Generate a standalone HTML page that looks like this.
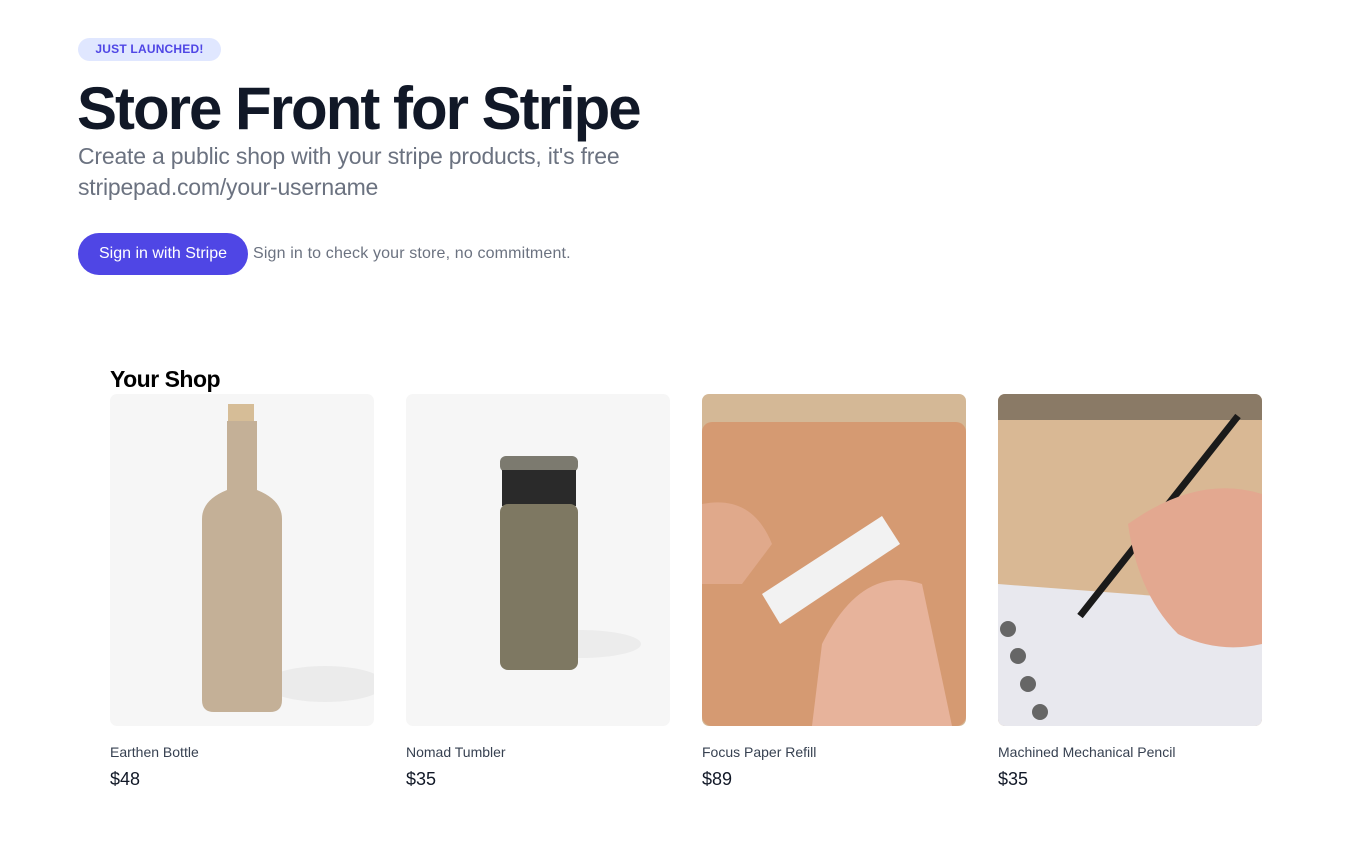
<!DOCTYPE html>
<html><head><style>
*{margin:0;padding:0;box-sizing:border-box}
body{width:1370px;height:858px;background:#fff;font-family:"Liberation Sans",sans-serif;position:relative;overflow:hidden}
.badge{position:absolute;left:78px;top:38px;width:143px;height:23px;border-radius:12px;background:#e0e7ff;color:#4f46e5;font-size:12px;font-weight:bold;text-align:center;line-height:23px;letter-spacing:0.2px}
h1{position:absolute;left:77px;top:74px;font-size:60px;font-weight:bold;color:#111827;letter-spacing:-2px;white-space:nowrap}
.sub{position:absolute;left:78px;top:141px;font-size:23px;line-height:31px;color:#6b7280;letter-spacing:-0.2px}
.btn{position:absolute;left:78px;top:233px;width:170px;height:42px;border-radius:21px;background:#4f46e5;color:#fff;font-size:16px;text-align:center;line-height:42px}
.note{position:absolute;left:253px;top:245px;font-size:16px;color:#6b7280;letter-spacing:0.15px}
h2{position:absolute;left:110px;top:366px;font-size:23px;font-weight:bold;color:#000;letter-spacing:-0.5px}
.card{position:absolute;top:394px;width:264px;height:332px;border-radius:7px;overflow:hidden;background:#f6f6f6}
.name{position:absolute;top:744px;font-size:14px;color:#374151}
.price{position:absolute;top:769px;font-size:18px;color:#111827}
</style></head><body>
<div class="badge">JUST LAUNCHED!</div>
<h1>Store Front for Stripe</h1>
<div class="sub">Create a public shop with your stripe products, it's free<br>stripepad.com/your-username</div>
<div class="btn">Sign in with Stripe</div>
<div class="note">Sign in to check your store, no commitment.</div>
<h2>Your Shop</h2>

<div class="card" style="left:110px">
<svg width="264" height="332"><ellipse cx="215" cy="290" rx="60" ry="18" fill="#ebebeb"/>
<rect x="118" y="10" width="26" height="18" fill="#d6bd97"/>
<path d="M117 27 L147 27 L147 96 Q172 106 172 125 L172 306 Q172 318 160 318 L104 318 Q92 318 92 306 L92 125 Q92 106 117 96 Z" fill="#c4b097"/></svg></div>

<div class="card" style="left:406px">
<svg width="264" height="332"><ellipse cx="175" cy="250" rx="60" ry="14" fill="#ececec"/>
<rect x="94" y="62" width="78" height="16" rx="6" fill="#7c7a6f"/>
<rect x="96" y="76" width="74" height="36" fill="#2a2a2a"/>
<rect x="94" y="110" width="78" height="166" rx="8" fill="#7e7862"/></svg></div>

<div class="card" style="left:702px;background:#d4b896">
<svg width="264" height="332"><rect x="0" y="28" width="264" height="304" rx="10" fill="#d59a72"/>
<path d="M60 200 L180 122 L198 150 L78 230 Z" fill="#f2f2f2"/>
<path d="M0 110 Q50 100 70 150 L40 190 L0 190 Z" fill="#e0a98b"/>
<path d="M120 250 Q160 170 220 190 L250 332 L110 332 Z" fill="#e7b39b"/></svg></div>

<div class="card" style="left:998px;background:#d9b894">
<svg width="264" height="332"><rect x="0" y="0" width="264" height="26" fill="#8a7a66"/>
<path d="M0 190 L264 210 L264 332 L0 332 Z" fill="#e8e8ee"/>
<path d="M82 222 L240 22" stroke="#1a1a1a" stroke-width="7"/>
<path d="M130 130 Q200 80 264 100 L264 250 Q220 260 180 240 Q140 200 130 130 Z" fill="#e3a890"/>
<g fill="#666"><circle cx="10" cy="235" r="8"/><circle cx="20" cy="262" r="8"/><circle cx="30" cy="290" r="8"/><circle cx="42" cy="318" r="8"/></g></svg></div>

<div class="name" style="left:110px">Earthen Bottle</div><div class="price" style="left:110px">$48</div>
<div class="name" style="left:406px">Nomad Tumbler</div><div class="price" style="left:406px">$35</div>
<div class="name" style="left:702px">Focus Paper Refill</div><div class="price" style="left:702px">$89</div>
<div class="name" style="left:998px">Machined Mechanical Pencil</div><div class="price" style="left:998px">$35</div>
</body></html>
